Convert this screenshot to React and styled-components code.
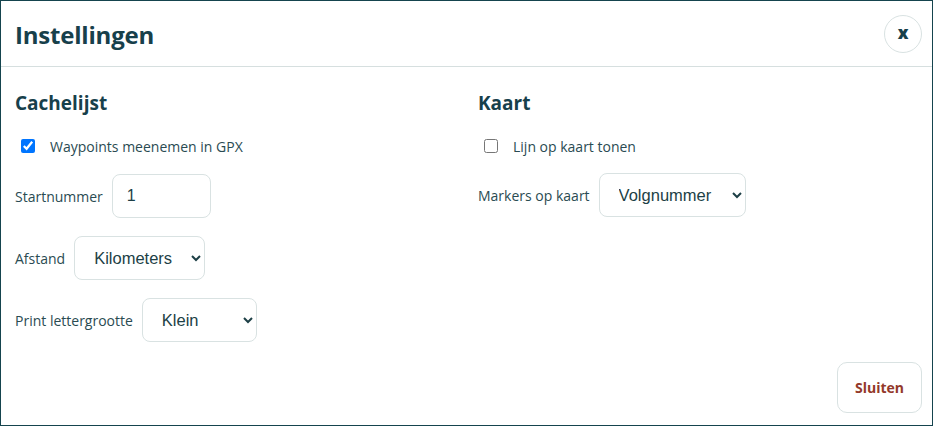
import React from 'react';
import styled, { createGlobalStyle } from 'styled-components';

const GlobalStyle = createGlobalStyle`
  html, body {
    margin: 0;
    padding: 0;
    background: #ffffff;
  }
  body {
    font-family: "Open Sans", "Noto Sans", sans-serif;
    color: #1d3f46;
  }
`;

const Frame = styled.div`
  box-sizing: border-box;
  width: 933px;
  height: 426px;
  border: 1px solid #15444e;
  display: flex;
  flex-direction: column;
  background: #fff;
`;

const Header = styled.header`
  height: 66px;
  box-sizing: border-box;
  border-bottom: 1px solid #d6dfdf;
  display: flex;
  align-items: center;
  justify-content: space-between;
  padding: 1px 10px 0 14px;
`;

const Title = styled.h1`
  margin: 0;
  font-size: 24px;
  font-weight: 700;
  color: #17404b;
  letter-spacing: -0.2px;
`;

const CloseButton = styled.button`
  width: 38px;
  height: 38px;
  border-radius: 50%;
  border: 1px solid #d9e2e2;
  background: #fff;
  color: #17404b;
  font-family: "Open Sans", sans-serif;
  font-weight: 800;
  font-size: 17px;
  line-height: 1;
  padding: 0 0 3px;
  cursor: pointer;
`;

const Body = styled.main`
  flex: 1;
  display: grid;
  grid-template-columns: 463px 1fr;
  padding: 25px 14px 0;
`;

const Column = styled.section`
  display: flex;
  flex-direction: column;
  align-items: flex-start;
`;

const SectionTitle = styled.h2`
  margin: 0;
  font-size: 19px;
  line-height: 23px;
  font-weight: 700;
  color: #17404b;
`;

const CheckRow = styled.label`
  display: flex;
  align-items: center;
  height: 20px;
  margin-top: 21px;
  font-size: 14px;
  color: #2a4b52;
`;

const Check = styled.input.attrs({ type: 'checkbox' })`
  width: 14px;
  height: 14px;
  margin: 0 15px 0 6px;
  accent-color: #0075ff;
`;

const FieldRow = styled.label`
  display: flex;
  align-items: center;
  gap: 9px;
  margin-top: ${(p) => p.$top || 18}px;
  font-size: 14px;
  color: #2a4b52;
`;

const TextInput = styled.input`
  box-sizing: border-box;
  width: 99px;
  height: 44px;
  border: 1px solid #d9e2e2;
  border-radius: 8px;
  padding: 0 14px;
  font-family: "Liberation Sans", Arial, sans-serif;
  font-size: 16px;
  color: #1d3f46;
  outline: none;
`;

const Select = styled.select`
  box-sizing: border-box;
  width: ${(p) => p.$width}px;
  height: 44px;
  border: 1px solid #d9e2e2;
  border-radius: 8px;
  padding: 0 10px 0 15px;
  background: #fff;
  font-family: "Liberation Sans", Arial, sans-serif;
  font-size: 16.5px;
  color: #1d3f46;
  outline: none;
`;

const Footer = styled.footer`
  display: flex;
  justify-content: flex-end;
  padding: 0 10px 12px;
`;

const CloseAction = styled.button`
  width: 85px;
  height: 51px;
  border: 1px solid #d9e2e2;
  border-radius: 10px;
  background: #fff;
  color: #93392a;
  font-family: "Open Sans", sans-serif;
  font-weight: 700;
  font-size: 14px;
  cursor: pointer;
`;

export default function App() {
  return (
    <>
      <GlobalStyle />
      <Frame>
        <Header>
          <Title>Instellingen</Title>
          <CloseButton>x</CloseButton>
        </Header>
        <Body>
          <Column>
            <SectionTitle>Cachelijst</SectionTitle>
            <CheckRow>
              <Check defaultChecked />
              Waypoints meenemen in GPX
            </CheckRow>
            <FieldRow $top={18}>
              Startnummer
              <TextInput defaultValue="1" />
            </FieldRow>
            <FieldRow>
              Afstand
              <Select $width={131} defaultValue="km">
                <option value="km">Kilometers</option>
                <option value="mi">Mijlen</option>
              </Select>
            </FieldRow>
            <FieldRow>
              Print lettergrootte
              <Select $width={115} defaultValue="klein">
                <option value="klein">Klein</option>
                <option value="groot">Groot</option>
              </Select>
            </FieldRow>
          </Column>
          <Column>
            <SectionTitle>Kaart</SectionTitle>
            <CheckRow>
              <Check />
              Lijn op kaart tonen
            </CheckRow>
            <FieldRow $top={17}>
              Markers op kaart
              <Select $width={147} defaultValue="volg">
                <option value="volg">Volgnummer</option>
                <option value="type">Type</option>
              </Select>
            </FieldRow>
          </Column>
        </Body>
        <Footer>
          <CloseAction>Sluiten</CloseAction>
        </Footer>
      </Frame>
    </>
  );
}
